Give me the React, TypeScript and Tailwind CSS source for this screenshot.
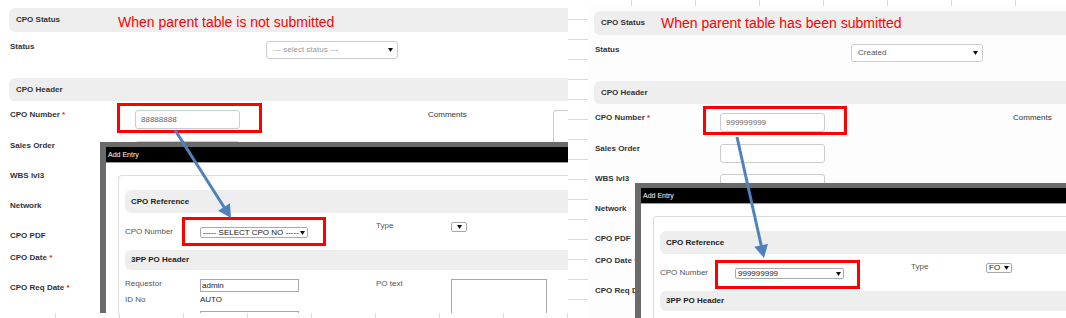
import type { ReactNode } from "react";

const sans = "font-['Liberation_Sans',Arial,sans-serif]";

const SectionBar = ({ children, className }: { children: ReactNode; className: string }) => (
  <div
    className={`flex items-center rounded-l-[6px] bg-[#eeeeee] pl-[7px] text-[8px] font-bold leading-none text-[#333] ${className}`}
  >
    {children}
  </div>
);

const Label = ({ children, required, className = "" }: { children: ReactNode; required?: boolean; className?: string }) => (
  <div className={`text-[8px] font-bold leading-[10px] text-[#333] ${className}`}>
    {children}
    {required && <span className="text-[#e0242b]"> *</span>}
  </div>
);

const Caret = () => (
  <svg width="5" height="4" viewBox="0 0 5 4" className="shrink-0">
    <polygon points="0,0 5,0 2.5,4" fill="#111" />
  </svg>
);

const Input = ({ value = "" }: { value?: string }) => (
  <div className="h-[19px] w-[105px] rounded-[3px] border border-[#cccccc] bg-white pl-[5px] text-[8px] leading-[17px] text-[#666]">
    {value}
  </div>
);

type FormRow = { label: string; required?: boolean; h: string; input?: boolean; value?: string };

const MainForm = ({ status, muted, cpoNumber, dialog }: { status: string; muted: boolean; cpoNumber: string; dialog: ReactNode }) => {
  const rows: FormRow[] = [
    { label: "CPO Number", required: true, h: "h-[31px]", input: true, value: cpoNumber },
    { label: "Sales Order", h: "h-[30px]", input: true },
    { label: "WBS lvl3", h: "h-[30px]", input: true },
    { label: "Network", h: "h-[30px]", input: true },
    { label: "CPO PDF", h: "h-[22px]" },
    { label: "CPO Date", required: true, h: "h-[30px]" },
    { label: "CPO Req Date", required: true, h: "h-[30px]" },
  ];

  return (
    <div className="relative flex flex-col pl-[9px] pt-[8px]">
      <SectionBar className="h-[24px]">CPO Status</SectionBar>
      <div className="flex h-[46px] pt-[9px]">
        <Label className="mt-[1px] w-[257px] shrink-0 pl-[1px]">Status</Label>
        <div
          className={`flex h-[18px] w-[132px] shrink-0 items-center justify-between rounded-[3px] border border-[#cccccc] bg-white pl-[6px] pr-[4px] text-[8px] leading-none ${
            muted ? "text-[#999]" : "text-[#555]"
          }`}
        >
          <span>{status}</span>
          <Caret />
        </div>
      </div>
      <SectionBar className="h-[23px]">CPO Header</SectionBar>
      <div className="flex pt-[9px]">
        <div className="flex w-[419px] shrink-0 flex-col pl-[1px]">
          {rows.map((r) => (
            <div key={r.label} className={`flex ${r.h}`}>
              <Label required={r.required} className="w-[125px] shrink-0">
                {r.label}
              </Label>
              {r.input && <Input value={r.value} />}
            </div>
          ))}
        </div>
        <div className="w-[125px] shrink-0 text-[8px] leading-[10px] text-[#333]">Comments</div>
        <div className="h-[70px] w-[120px] shrink-0 rounded-l-[4px] border border-r-0 border-[#cccccc] bg-white" />
      </div>
      {dialog}
    </div>
  );
};

const DlgBar = ({ children, className }: { children: ReactNode; className: string }) => (
  <div className={`flex items-center rounded-l-[6px] bg-[#eeeeee] pl-[6px] text-[8px] font-bold leading-none text-[#222] ${className}`}>
    {children}
  </div>
);

const DlgLabel = ({ children, className = "" }: { children: ReactNode; className?: string }) => (
  <div className={`shrink-0 text-[8px] leading-[10px] text-[#555] ${className}`}>{children}</div>
);

const OldSelect = ({ value, className }: { value: string; className: string }) => (
  <div
    className={`flex items-center justify-between rounded-[2px] border border-[#a9a9a9] bg-white px-[2px] text-[8px] leading-none text-[#222] ${className}`}
  >
    <span>{value}</span>
    <Caret />
  </div>
);

type AddEntryProps = {
  position: string;
  cpoNo: string;
  cpoClass: string;
  typeValue: string;
  typeClass: string;
  showHeaderRows: boolean;
};

const AddEntry = ({ position, cpoNo, cpoClass, typeValue, typeClass, showHeaderRows }: AddEntryProps) => (
  <div className={`absolute h-[220px] w-[560px] border-l-[6px] border-t-[5px] border-[#6a6a6a] bg-white ${position}`}>
    <div className="flex h-[16px] items-center border-b border-[#9a9a9a] bg-black pl-[2px] text-[7px] leading-none text-white">
      Add Entry
    </div>
    <div className="pl-[12px] pt-[12px]">
      <div className="h-[200px] rounded-tl-[4px] border-l border-t border-[#dddddd] pl-[6px] pt-[14px]">
        <DlgBar className="h-[23px]">CPO Reference</DlgBar>
        <div className="grid h-[37px] grid-cols-[75px_176px_75px_1fr] items-start">
          <DlgLabel className="mt-[14px]">CPO Number</DlgLabel>
          <OldSelect value={cpoNo} className={`mt-[14px] h-[11px] ${cpoClass}`} />
          <DlgLabel className="mt-[8px]">Type</DlgLabel>
          <OldSelect value={typeValue} className={`mt-[9px] h-[10px] ${typeClass}`} />
        </div>
        <DlgBar className="h-[20px]">3PP PO Header</DlgBar>
        {showHeaderRows && (
          <div className="flex pt-[9px]">
            <div className="flex w-[251px] shrink-0 flex-col">
              <div className="flex h-[16px]">
                <DlgLabel className="w-[75px]">Requestor</DlgLabel>
                <div className="h-[13px] w-[99px] border border-[#a9a9a9] pl-[1px] text-[8px] leading-[11px] text-[#222]">admin</div>
              </div>
              <div className="flex h-[16px]">
                <DlgLabel className="w-[75px]">ID No</DlgLabel>
                <div className="text-[8px] leading-[10px] text-[#222]">AUTO</div>
              </div>
              <div className="flex h-[16px] pl-[75px]">
                <div className="h-[13px] w-[99px] border border-[#a9a9a9]" />
              </div>
            </div>
            <DlgLabel className="w-[75px]">PO text</DlgLabel>
            <div className="h-[46px] w-[96px] border border-[#a9a9a9]" />
          </div>
        )}
      </div>
    </div>
  </div>
);

const Arrow = ({ x1, y1, x2, y2 }: { x1: number; y1: number; x2: number; y2: number }) => {
  const len = Math.hypot(x2 - x1, y2 - y1);
  const ux = (x2 - x1) / len;
  const uy = (y2 - y1) / len;
  const bx = x2 - ux * 13;
  const by = y2 - uy * 13;
  const pts = `${x2},${y2} ${bx - uy * 7},${by + ux * 7} ${bx + uy * 7},${by - ux * 7}`;
  return (
    <g>
      <line x1={x1} y1={y1} x2={bx + ux * 2} y2={by + uy * 2} stroke="#4f81bd" strokeWidth={3} />
      <polygon points={pts} fill="#4f81bd" />
    </g>
  );
};

export default function App() {
  return (
    <div
      className={`relative flex h-[318px] w-[1066px] overflow-hidden bg-white bg-[linear-gradient(to_right,#dadada_1px,transparent_1px),linear-gradient(to_bottom,#dadada_1px,transparent_1px)] bg-[size:64px_20px] bg-[position:55px_19px] ${sans}`}
    >
      <div className="h-[313px] w-[568px] shrink-0 overflow-hidden bg-white">
        <MainForm
          status="--- select status ---"
          muted
          cpoNumber="88888888"
          dialog={
            <AddEntry
              position="left-[100px] top-[142px]"
              cpoNo="----- SELECT CPO NO -----"
              cpoClass="w-[108px]"
              typeValue=""
              typeClass="w-[16px] justify-center"
              showHeaderRows
            />
          }
        />
      </div>

      <div className="ml-[20px] mt-[6px] h-[312px] w-[478px] shrink-0 overflow-hidden bg-[#fdfdfd]">
        <div className="-ml-[3px] -mt-[3px] w-[481px]">
          <MainForm
            status="Created"
            muted={false}
            cpoNumber="999999999"
            dialog={
              <AddEntry
                position="left-[50px] top-[180px]"
                cpoNo="999999999"
                cpoClass="w-[109px]"
                typeValue="FO"
                typeClass="w-[26px] gap-[2px]"
                showHeaderRows={false}
              />
            }
          />
        </div>
      </div>

      {/* annotations drawn over the screenshots */}
      <div className="absolute left-[118px] top-[13px] text-[14px] leading-[18px] text-[#ff0000]">When parent table is not submitted</div>
      <div className="absolute left-[661px] top-[14px] text-[14px] leading-[18px] text-[#ff0000]">When parent table has been submitted</div>

      <div className="absolute left-[117px] top-[103px] h-[30px] w-[145px] border-[3px] border-[#ff0000]" />
      <div className="absolute left-[182px] top-[217px] h-[29px] w-[144px] border-[3px] border-[#ff0000]" />
      <div className="absolute left-[703px] top-[106px] h-[29px] w-[144px] border-[3px] border-[#ff0000]" />
      <div className="absolute left-[715px] top-[260px] h-[29px] w-[145px] border-[3px] border-[#ff0000]" />

      <svg className="pointer-events-none absolute left-0 top-0" width="1066" height="318">
        <Arrow x1={175} y1={130} x2={231} y2={218} />
        <Arrow x1={737} y1={137} x2={764} y2={258} />
      </svg>
    </div>
  );
}
